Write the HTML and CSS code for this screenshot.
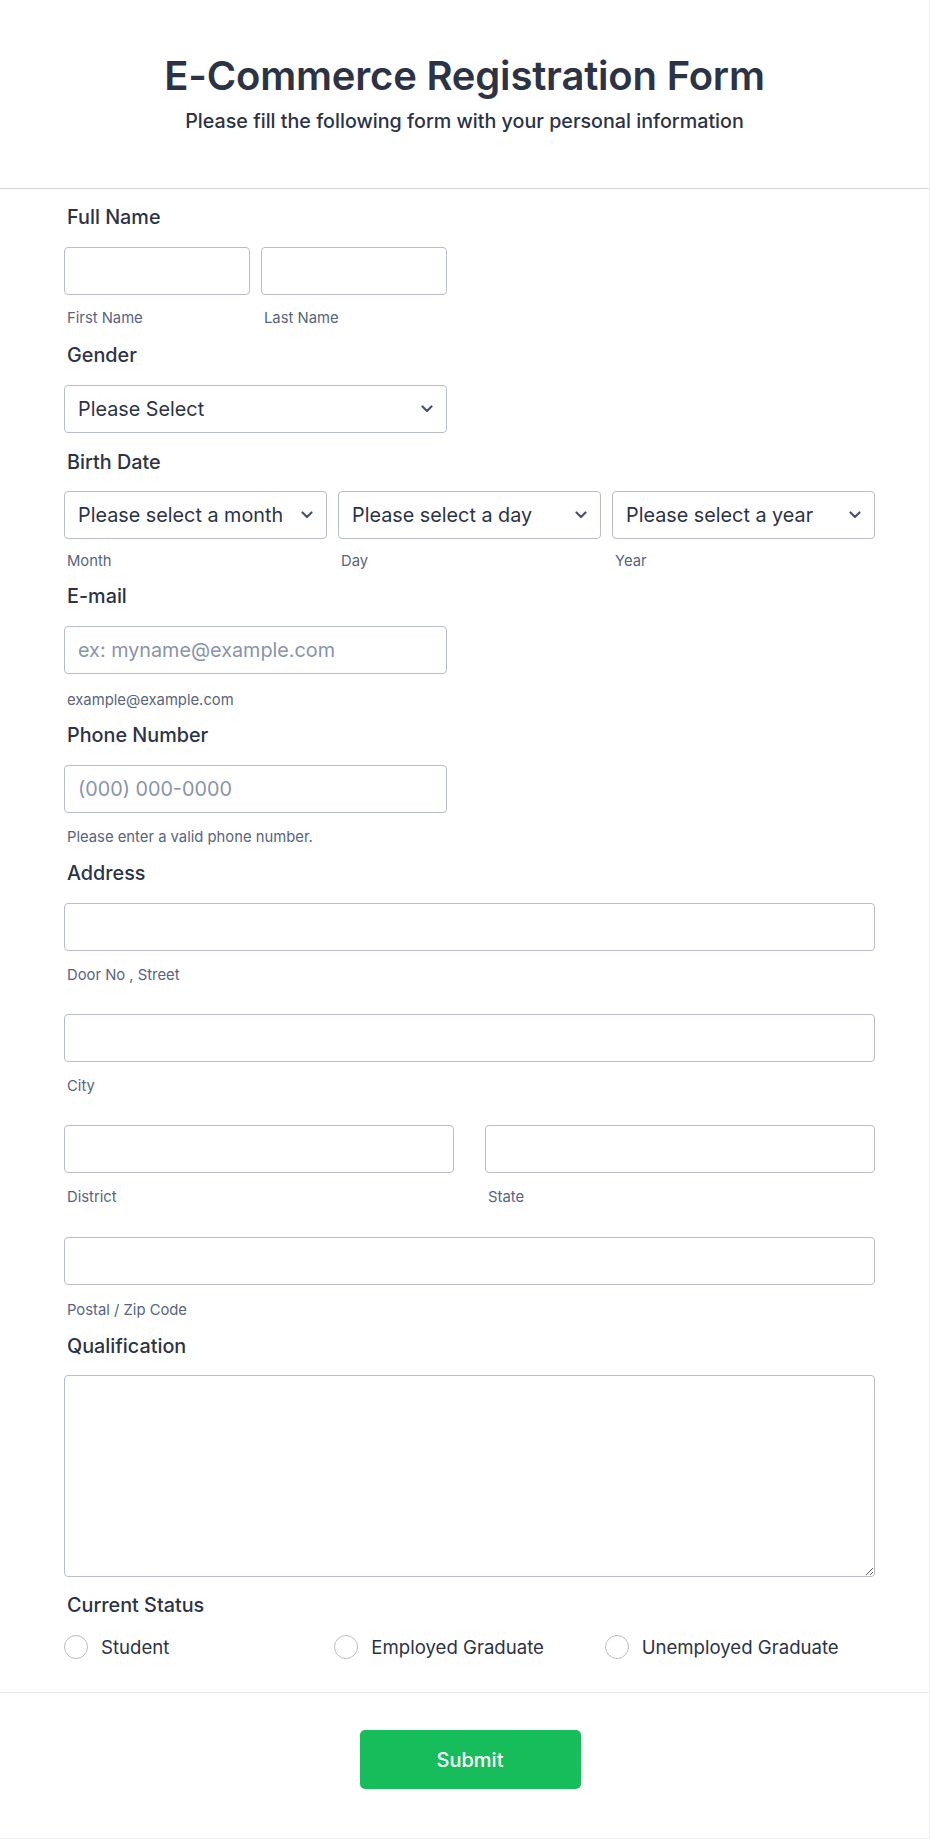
FILE: index.html
```html
<!DOCTYPE html>
<html lang="en">
<head>
<meta charset="utf-8">
<title>E-Commerce Registration Form</title>
<link rel="stylesheet" href="styles.css">
</head>
<body>
<div class="form">
  <header class="form-header">
    <h1 class="title">E-Commerce Registration Form</h1>
    <p class="subtitle">Please fill the following form with your personal information</p>
  </header>

  <div class="form-body">
    <div class="field f-name">
      <div class="label">Full Name</div>
      <div class="row cols-name">
        <div class="col">
          <input class="input" type="text">
          <div class="sublabel">First Name</div>
        </div>
        <div class="col">
          <input class="input" type="text">
          <div class="sublabel">Last Name</div>
        </div>
      </div>
    </div>

    <div class="field f-gender">
      <div class="label">Gender</div>
      <div class="select-wrap half">
        <select class="select"><option>Please Select</option></select>
        <svg class="chev" viewBox="0 0 12 8" width="12" height="8"><path d="M1.5 1.5 L6 6 L10.5 1.5" fill="none" stroke="#4c5368" stroke-width="2.2" stroke-linecap="round" stroke-linejoin="round"/></svg>
      </div>
    </div>

    <div class="field f-birth">
      <div class="label">Birth Date</div>
      <div class="row cols-3">
        <div class="col">
          <div class="select-wrap">
            <select class="select"><option>Please select a month</option></select>
            <svg class="chev" viewBox="0 0 12 8" width="12" height="8"><path d="M1.5 1.5 L6 6 L10.5 1.5" fill="none" stroke="#4c5368" stroke-width="2.2" stroke-linecap="round" stroke-linejoin="round"/></svg>
          </div>
          <div class="sublabel sub-tight">Month</div>
        </div>
        <div class="col">
          <div class="select-wrap">
            <select class="select"><option>Please select a day</option></select>
            <svg class="chev" viewBox="0 0 12 8" width="12" height="8"><path d="M1.5 1.5 L6 6 L10.5 1.5" fill="none" stroke="#4c5368" stroke-width="2.2" stroke-linecap="round" stroke-linejoin="round"/></svg>
          </div>
          <div class="sublabel sub-tight">Day</div>
        </div>
        <div class="col">
          <div class="select-wrap">
            <select class="select"><option>Please select a year</option></select>
            <svg class="chev" viewBox="0 0 12 8" width="12" height="8"><path d="M1.5 1.5 L6 6 L10.5 1.5" fill="none" stroke="#4c5368" stroke-width="2.2" stroke-linecap="round" stroke-linejoin="round"/></svg>
          </div>
          <div class="sublabel sub-tight">Year</div>
        </div>
      </div>
    </div>

    <div class="field f-email">
      <div class="label">E-mail</div>
      <input class="input half" type="email" placeholder="ex: myname@example.com">
      <div class="sublabel sub-wide">example@example.com</div>
    </div>

    <div class="field f-phone">
      <div class="label">Phone Number</div>
      <input class="input half" type="tel" placeholder="(000) 000-0000">
      <div class="sublabel">Please enter a valid phone number.</div>
    </div>

    <div class="field f-address">
      <div class="label">Address</div>
      <div class="addr-line">
        <input class="input" type="text">
        <div class="sublabel">Door No , Street</div>
      </div>
      <div class="addr-line">
        <input class="input" type="text">
        <div class="sublabel">City</div>
      </div>
      <div class="addr-line row cols-2">
        <div class="col">
          <input class="input" type="text">
          <div class="sublabel">District</div>
        </div>
        <div class="col">
          <input class="input" type="text">
          <div class="sublabel">State</div>
        </div>
      </div>
      <div class="addr-line addr-zip">
        <input class="input" type="text">
        <div class="sublabel sub-zip">Postal / Zip Code</div>
      </div>
    </div>

    <div class="field f-qual">
      <div class="label">Qualification</div>
      <textarea class="textarea"></textarea>
    </div>

    <div class="field f-status">
      <div class="label">Current Status</div>
      <div class="radios">
        <label class="radio"><span class="circle"></span><span class="radio-text">Student</span></label>
        <label class="radio"><span class="circle"></span><span class="radio-text">Employed Graduate</span></label>
        <label class="radio"><span class="circle"></span><span class="radio-text">Unemployed Graduate</span></label>
      </div>
    </div>
  </div>

  <footer class="form-footer">
    <button class="submit" type="button">Submit</button>
  </footer>
</div>
</body>
</html>
```

FILE: styles.css
```css
* {
  box-sizing: border-box;
}

html, body {
  margin: 0;
  padding: 0;
  background: #ffffff;
}

body {
  font-family: Inter, "Noto Sans", "Liberation Sans", sans-serif;
  color: #2c3345;
}

.form {
  width: 930px;
  height: 1839px;
  background: #ffffff;
  border-right: 1px solid #eceef4;
  border-bottom: 1px solid #eceef4;
  display: flex;
  flex-direction: column;
}

/* Header */
.form-header {
  height: 189px;
  border-bottom: 1px solid #d6d7e6;
  padding-top: 52px;
  text-align: center;
}

.title {
  margin: 0;
  font-size: 40px;
  line-height: 48px;
  font-weight: 600;
  color: #2c3345;
  letter-spacing: -0.2px;
}

.subtitle {
  margin: 9px 0 0;
  font-size: 19.7px;
  line-height: 24px;
  font-weight: 500;
  color: #2c3345;
}

/* Body */
.form-body {
  padding: 16px 0 0 64px;
  width: 875px;
  display: flex;
  flex-direction: column;
}

.field {
  display: flex;
  flex-direction: column;
}

.f-gender { margin-top: 16px; }
.f-birth { margin-top: 17px; }
.f-email { margin-top: 14px; }
.f-phone { margin-top: 14px; }
.f-address { margin-top: 15px; }
.f-qual { margin-top: 15px; }
.f-status { margin-top: 16px; }

.label {
  font-size: 19.8px;
  line-height: 24px;
  font-weight: 500;
  color: #2c3345;
  padding-left: 3px;
  margin-bottom: 18px;
}

.f-birth .label,
.f-qual .label { margin-bottom: 17px; }

.sublabel {
  font-size: 14.8px;
  line-height: 18px;
  color: #57647e;
  padding-left: 3px;
  margin-top: 14px;
}

.sub-tight { margin-top: 13px; }
.sub-wide { margin-top: 17px; }
.f-phone .sublabel { margin-top: 15px; }
.f-address .sublabel { margin-top: 15px; }
.f-address .sub-zip { margin-top: 16px; }

.row {
  display: grid;
}

.cols-name {
  grid-template-columns: 186px 186px;
  column-gap: 11px;
}

.cols-3 {
  grid-template-columns: repeat(3, 1fr);
  column-gap: 11px;
}

.cols-2 {
  grid-template-columns: 1fr 1fr;
  column-gap: 31px;
}

.col {
  display: flex;
  flex-direction: column;
}

.half {
  width: 383px;
}

.input,
.select,
.textarea {
  display: block;
  width: 100%;
  height: 48px;
  border: 1px solid #b8bdc9;
  border-radius: 4px;
  background: #ffffff;
  font-family: Inter, "Noto Sans", "Liberation Sans", sans-serif;
  font-size: 19.8px;
  color: #2c3345;
  padding: 0 13px;
  margin: 0;
  outline: none;
}

.input.half { width: 383px; }

.input::placeholder {
  color: #8894ab;
  opacity: 1;
}

.select-wrap {
  position: relative;
  width: 100%;
}

.select-wrap.half { width: 383px; }

.select {
  appearance: none;
  -webkit-appearance: none;
  padding-right: 36px;
}

.chev {
  position: absolute;
  right: 14px;
  top: 50%;
  transform: translateY(-50%);
  pointer-events: none;
}

.addr-line + .addr-line {
  margin-top: 30px;
}

.addr-line.addr-zip {
  margin-top: 31px;
}

.textarea {
  height: 202px;
  padding: 12px 13px;
  resize: vertical;
}

.radios {
  display: grid;
  grid-template-columns: repeat(3, 1fr);
}

.radio {
  display: flex;
  align-items: center;
  gap: 13px;
  height: 24px;
}

.circle {
  width: 24px;
  height: 24px;
  border-radius: 50%;
  border: 1px solid #b8bdc9;
  background: #ffffff;
  flex: none;
}

.radio-text {
  font-size: 18.6px;
  line-height: 24px;
  color: #2c3345;
}

/* Footer */
.form-footer {
  margin-top: 33px;
  border-top: 1px solid #e6e8f0;
  padding-top: 37px;
  display: flex;
  justify-content: center;
}

.submit {
  width: 221px;
  height: 59px;
  border: none;
  border-radius: 5px;
  background: #18bd5b;
  color: #ffffff;
  font-family: Inter, "Noto Sans", "Liberation Sans", sans-serif;
  font-size: 20px;
  font-weight: 500;
  margin-left: 11px;
}
```
